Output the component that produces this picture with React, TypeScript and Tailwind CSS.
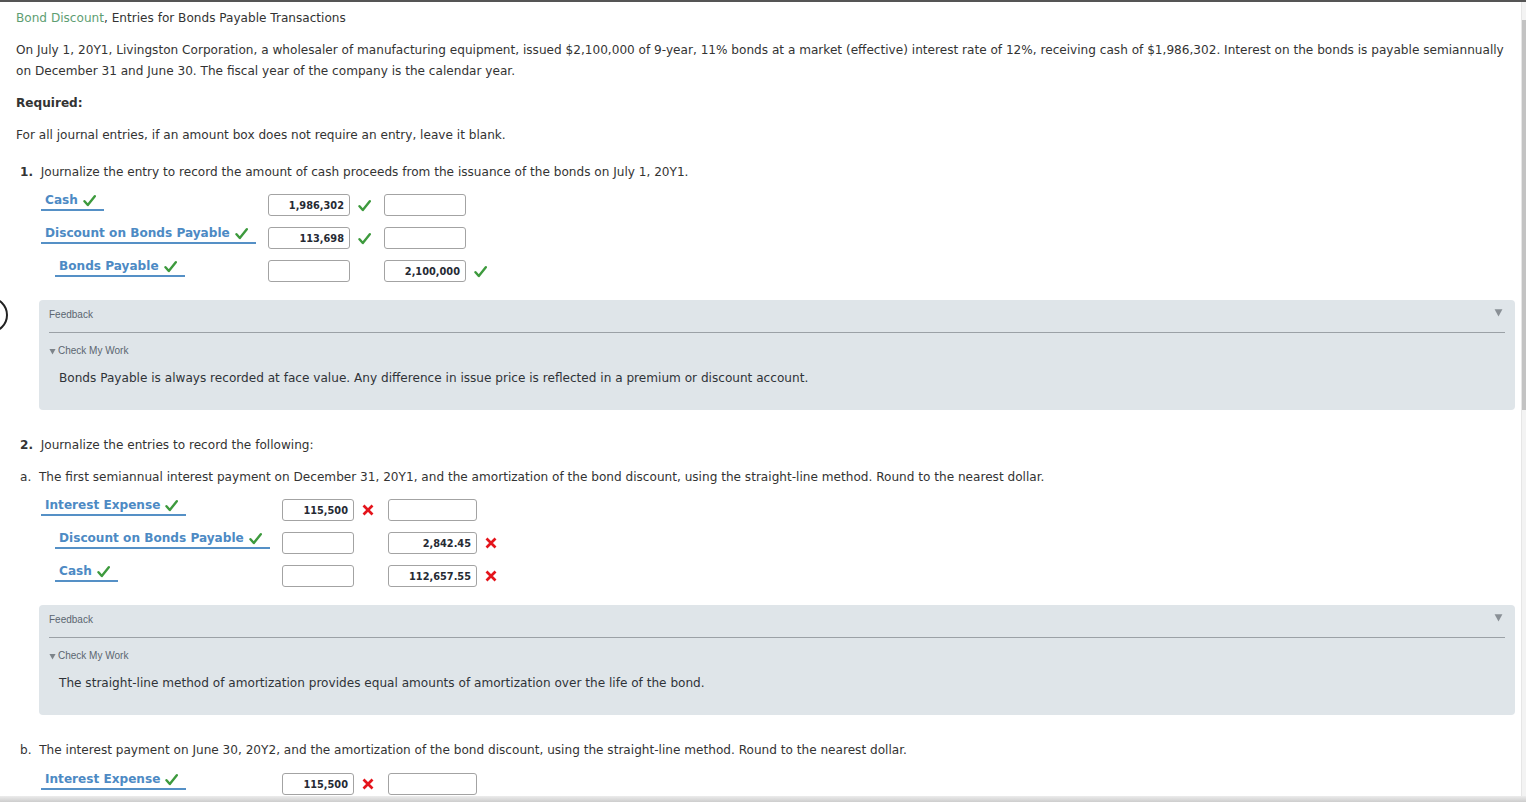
import type { ReactNode } from "react";

const Check = () => (
    <svg width="13" height="13" viewBox="0 0 13 13" className="shrink-0">
        <path d="M1.5 7.2 L4.8 11 L11.8 2.2" fill="none" stroke="#3d9a3d" strokeWidth="2.4" strokeLinecap="round" strokeLinejoin="round" />
    </svg>
);

const Cross = () => (
    <svg width="12" height="12" viewBox="0 0 12 12" className="shrink-0">
        <path d="M1.5 1.5 L10.5 10.5 M10.5 1.5 L1.5 10.5" fill="none" stroke="#e4141b" strokeWidth="2.7" strokeLinecap="butt" />
    </svg>
);

const Tri = ({ size, color }: { size: number; color: string }) => (
    <svg width={size} height={size} viewBox="0 0 8 8" className="shrink-0">
        <path d="M0.5 1 L7.5 1 L4 7.5 Z" fill={color} />
    </svg>
);

function Label({ text, indent }: { text: string; indent?: boolean }) {
    return (
        <div className={indent ? "flex pl-[14px]" : "flex"}>
            <div className="-mt-[2px] flex items-center gap-[5px] whitespace-nowrap border-b-2 border-[#5590c6] pb-[1px] pl-[4px] pr-[8px] text-[12.1px] font-bold leading-[16px] text-[#4d8ac4]">
                <span>{text}</span>
                <Check />
            </div>
        </div>
    );
}

function Amount({ value, w }: { value?: string; w: string }) {
    return (
        <div className={`${w} flex h-[22px] shrink-0 items-center justify-end rounded-[3px] border border-[#a3a3a3] bg-white pr-[5px] text-[9.8px] font-bold text-[#262a33]`}>
            {value}
        </div>
    );
}

type Row = { label: string; indent?: boolean; dr?: string; cr?: string; drMark?: ReactNode; crMark?: ReactNode };

function Entry({ rows, labelW, inputW1, inputW2 }: { rows: Row[]; labelW: string; inputW1: string; inputW2: string }) {
    return (
        <div className="flex flex-col gap-[11px] pl-[25px]">
            {rows.map((r, i) => (
                <div key={i} className="flex h-[22px] items-start">
                    <div className={`${labelW} shrink-0`}>
                        <Label text={r.label} indent={r.indent} />
                    </div>
                    <Amount value={r.dr} w={inputW1} />
                    <div className="flex h-[22px] w-[34px] shrink-0 items-center pl-[8px]">{r.drMark}</div>
                    <Amount value={r.cr} w={inputW2} />
                    <div className="flex h-[22px] items-center pl-[8px]">{r.crMark}</div>
                </div>
            ))}
        </div>
    );
}

function Feedback({ text }: { text: string }) {
    return (
        <div className="relative ml-[23px] mr-[6px] rounded-[4px] bg-[#dfe5e9] px-[10px] pb-[23px] pt-[9px]">
            <div className="absolute right-[12px] top-[8px]">
                <Tri size={9} color="#8a9096" />
            </div>
            <div className="font-['Liberation_Sans',Arial,sans-serif] text-[10px] leading-[12px] text-[#5c6670]">Feedback</div>
            <div className="mt-[11px] border-t border-[#9ba1a6]" />
            <div className="mt-[12px] flex items-center gap-[2px] font-['Liberation_Sans',Arial,sans-serif] text-[10px] leading-[12px] text-[#5c6670]">
                <Tri size={7} color="#7d848a" />
                <span>Check My Work</span>
            </div>
            <p className="mt-[12px] pl-[10px] text-[12.1px] leading-[18px] text-[#2f3338]">{text}</p>
        </div>
    );
}

export default function App() {
    return (
        <div className="relative flex h-[802px] w-full overflow-hidden border-t-2 border-[#555] bg-white font-['DejaVu_Sans',Verdana,sans-serif] text-[12.1px] leading-[21px] text-[#333]">
            {/* left partial circle */}
            <svg className="absolute left-0 top-[294px]" width="12" height="40" viewBox="0 0 12 40">
                <circle cx="-10" cy="19" r="17" fill="none" stroke="#222" strokeWidth="2" />
            </svg>

            <div className="min-w-0 flex-1 pl-[16px] pt-[6px]">
                <div>
                    <span className="text-[#5e9e72]">Bond Discount</span>, Entries for Bonds Payable Transactions
                </div>
                <p className="mt-[11px] whitespace-nowrap">
                    On July 1, 20Y1, Livingston Corporation, a wholesaler of manufacturing equipment, issued $2,100,000 of 9-year, 11% bonds at a market (effective) interest rate of 12%, receiving cash of $1,986,302. Interest on the bonds is payable semiannually
                    <br />
                    on December 31 and June 30. The fiscal year of the company is the calendar year.
                </p>
                <p className="mt-[11px] font-bold">Required:</p>
                <p className="mt-[11px]">For all journal entries, if an amount box does not require an entry, leave it blank.</p>

                <p className="mt-[16px] pl-[4px]">
                    <span className="font-bold">1.</span>&nbsp; Journalize the entry to record the amount of cash proceeds from the issuance of the bonds on July 1, 20Y1.
                </p>
                <div className="mt-[11px]">
                    <Entry
                        labelW="w-[227px]"
                        inputW1="w-[82px]"
                        inputW2="w-[82px]"
                        rows={[
                            { label: "Cash", dr: "1,986,302", drMark: <Check /> },
                            { label: "Discount on Bonds Payable", dr: "113,698", drMark: <Check /> },
                            { label: "Bonds Payable", indent: true, cr: "2,100,000", crMark: <Check /> },
                        ]}
                    />
                </div>
                <div className="mt-[18px]">
                    <Feedback text="Bonds Payable is always recorded at face value. Any difference in issue price is reflected in a premium or discount account." />
                </div>

                <p className="mt-[25px] pl-[4px]">
                    <span className="font-bold">2.</span>&nbsp; Journalize the entries to record the following:
                </p>
                <p className="mt-[11px] pl-[4px]">
                    a.&nbsp; The first semiannual interest payment on December 31, 20Y1, and the amortization of the bond discount, using the straight-line method. Round to the nearest dollar.
                </p>
                <div className="mt-[11px]">
                    <Entry
                        labelW="w-[241px]"
                        inputW1="w-[72px]"
                        inputW2="w-[89px]"
                        rows={[
                            { label: "Interest Expense", dr: "115,500", drMark: <Cross /> },
                            { label: "Discount on Bonds Payable", indent: true, cr: "2,842.45", crMark: <Cross /> },
                            { label: "Cash", indent: true, cr: "112,657.55", crMark: <Cross /> },
                        ]}
                    />
                </div>
                <div className="mt-[18px]">
                    <Feedback text="The straight-line method of amortization provides equal amounts of amortization over the life of the bond." />
                </div>

                <p className="mt-[25px] pl-[4px]">
                    b.&nbsp; The interest payment on June 30, 20Y2, and the amortization of the bond discount, using the straight-line method. Round to the nearest dollar.
                </p>
                <div className="mt-[12px]">
                    <Entry
                        labelW="w-[241px]"
                        inputW1="w-[72px]"
                        inputW2="w-[89px]"
                        rows={[{ label: "Interest Expense", dr: "115,500", drMark: <Cross /> }]}
                    />
                </div>
            </div>

            {/* scrollbar */}
            <div className="w-[5px] shrink-0 border-l border-[#e6e6e6] bg-[#f3f3f3]">
                <div className="mt-[18px] h-[390px] bg-[#c3c3c3]" />
            </div>

            {/* bottom shade */}
            <div className="absolute bottom-0 left-0 right-0 h-[6px] bg-gradient-to-b from-[#ececec] to-[#cdcdcd]" />
        </div>
    );
}
